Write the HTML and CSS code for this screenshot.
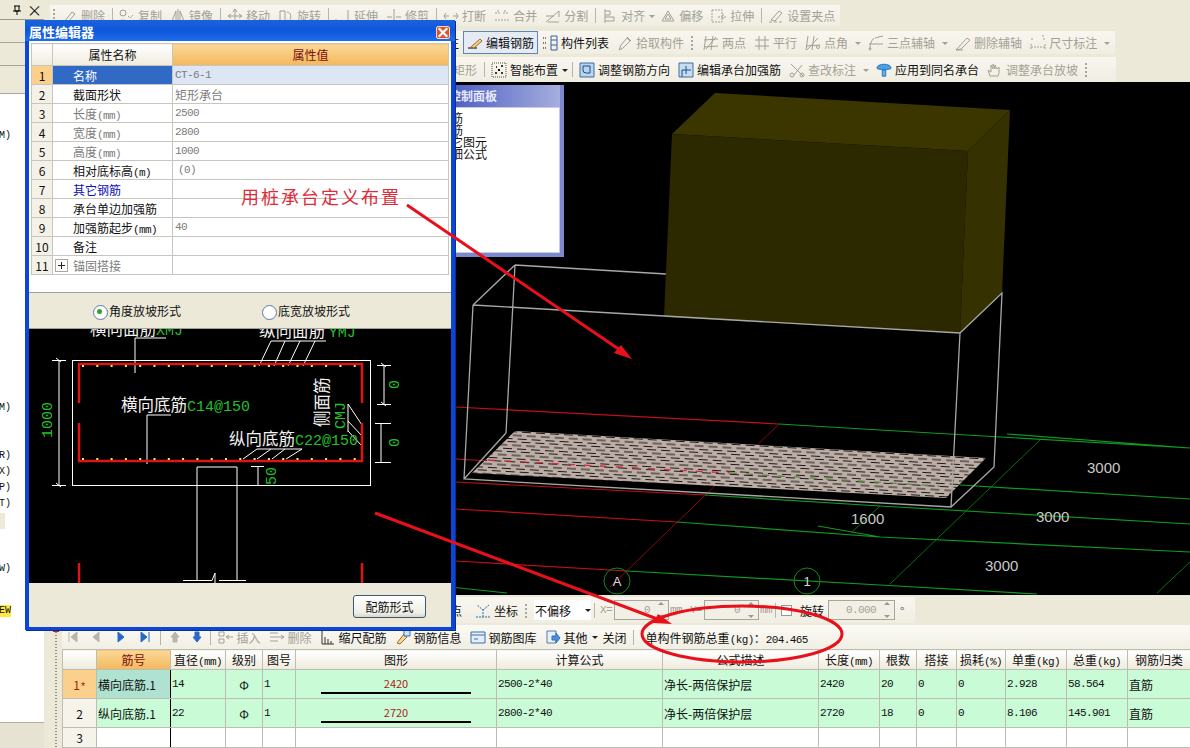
FILE: index.html
```html
<!DOCTYPE html>
<html lang="zh-CN">
<head>
    <meta charset="UTF-8">
    <title>属性编辑器</title>
    <link rel="stylesheet" href="styles.css">
</head>
<body>
<!-- icon set -->
<svg class="defs" width="0" height="0">
    <symbol id="i-del" viewBox="0 0 16 16"><path d="M2 14 10 4l3 2-7 8z M1 15h6"/></symbol>
    <symbol id="i-copy" viewBox="0 0 16 16"><circle cx="4" cy="5" r="3"/><path d="M9 8l2 2 3-3M2 12h4" stroke-dasharray="2 1"/></symbol>
    <symbol id="i-mirror" viewBox="0 0 16 16"><path d="M8 1v14M6 13H2l4-10zM10 13h4L10 3z"/></symbol>
    <symbol id="i-move" viewBox="0 0 16 16"><path d="M8 1v14M1 8h14M8 1 6 4M8 1l2 3M1 8l3-2M1 8l3 2M15 8l-3-2M15 8l-3 2M8 15l-2-3M8 15l2-3"/></symbol>
    <symbol id="i-rot" viewBox="0 0 16 16"><path d="M2 3h5v10H2zM9 4c4 0 5 6 2 9M11 13l-2-1"/></symbol>
    <symbol id="i-ext" viewBox="0 0 16 16"><path d="M1 13h6M9 13h2M13 2v13M1 11v3"/></symbol>
    <symbol id="i-trim" viewBox="0 0 16 16"><path d="M8 1v14M1 9h5M10 9h5"/></symbol>
    <symbol id="i-break" viewBox="0 0 16 16"><path d="M1 8h5M10 8h5M3 5 1 8l2 3M13 5l2 3-2 3"/></symbol>
    <symbol id="i-merge" viewBox="0 0 16 16"><path d="M1 5h5M9 5h6M1 12h14M4 2v3M11 2v3" stroke-dasharray="2 1"/></symbol>
    <symbol id="i-split" viewBox="0 0 16 16"><path d="M1 14 14 3M1 8h8M3 14h11M14 3v6"/></symbol>
    <symbol id="i-align" viewBox="0 0 16 16"><path d="M3 1v14M3 3h5v4H3M3 9h9v4H3"/></symbol>
    <symbol id="i-offset" viewBox="0 0 16 16"><path d="M2 13 8 3l6 10zM5 11l3-5 3 5z"/></symbol>
    <symbol id="i-stretch" viewBox="0 0 16 16"><path d="M1 2h10v12H1zM7 9h8M12 6v6" stroke-dasharray="2 1"/></symbol>
    <symbol id="i-grab" viewBox="0 0 16 16"><path d="M1 14h3M6 14h3M11 14h3M3 12 11 3l3 2-7 8z"/></symbol>
    <symbol id="i-pen" viewBox="0 0 16 16"><path d="M1 13h9" stroke="#000"/><path d="M4 12 13 4l2 2-8 7z" stroke="#a06a20" fill="#f4d090"/></symbol>
    <symbol id="i-list" viewBox="0 0 16 16"><path d="M1 3h3M1 8h3M1 13h3" stroke="#000" stroke-dasharray="1 1"/><path d="M9 1h6v14H9zM9 5h6M9 10h6" stroke="#36639c"/></symbol>
    <symbol id="i-pick" viewBox="0 0 16 16"><path d="M2 15l2-5 6-7 3 3-7 7z"/><path d="M10 2l4 4"/></symbol>
    <symbol id="i-two" viewBox="0 0 16 16"><path d="M3 1 1 15M10 1 8 15M1 5l14-1M1 12l14-1M13 2 3 14"/></symbol>
    <symbol id="i-par" viewBox="0 0 16 16"><path d="M5 1v14M11 1v14M1 5h14M1 11h14"/></symbol>
    <symbol id="i-ang" viewBox="0 0 16 16"><path d="M3 1 1 15M9 1 7 15M1 11l14-1M13 3 2 15"/><circle cx="13" cy="12" r="1.500"/></symbol>
    <symbol id="i-three" viewBox="0 0 16 16"><path d="M1 9h14M6 3c-3 3-4 6-4 11M15 1 7 3"/><circle cx="2" cy="14" r="1"/></symbol>
    <symbol id="i-rm" viewBox="0 0 16 16"><path d="M1 15 12 3l3 2-9 9zM1 15h7"/></symbol>
    <symbol id="i-dim" viewBox="0 0 16 16"><path d="M1 9v6M15 9v6M1 12h14M1 4h2M12 1h2M14 3v3" stroke-dasharray="2 1"/></symbol>
    <symbol id="i-smart" viewBox="0 0 16 16"><path d="M1 1h14v14H1z" stroke="#555" stroke-dasharray="1 1"/><path d="M5 5h1M10 4h2M4 11h2M10 11h2M8 7v2M7 8h2" stroke="#000" stroke-width="1.500"/></symbol>
    <symbol id="i-turn" viewBox="0 0 16 16"><path d="M1 1h14v14H1z" stroke="#3c6ea5" fill="#b8d4ee"/><path d="M4 4h7v7H7a3 3 0 0 1-3-3z" stroke="#1e4f88"/></symbol>
    <symbol id="i-cap" viewBox="0 0 16 16"><path d="M1 1h14v14H1z" stroke="#3c6ea5" fill="#c6dcf2"/><path d="M4 15V8h9M8 4v8" stroke="#1e4f88"/></symbol>
    <symbol id="i-check" viewBox="0 0 16 16"><path d="M2 2l12 12M5 13l8-10"/><circle cx="3" cy="13" r="2"/><circle cx="13" cy="13" r="2"/></symbol>
    <symbol id="i-apply" viewBox="0 0 18 18"><path d="M1 7c0-6 16-6 16 0 0 2-16 2-16 0z" fill="#4aa0e6" stroke="#2a70b8"/><path d="M7 9h4v7H7z" fill="#5ab0ea" stroke="#2a70b8"/></symbol>
    <symbol id="i-hand" viewBox="0 0 16 16"><path d="M3 14 1 8l3 2V3l2 4V2l2 5V3l2 4 2-2v6l-1 3z"/></symbol>
    <symbol id="i-axis" viewBox="0 0 16 16"><path d="M8 15V8L2 3M8 8l6-5M1 15h14" stroke="#2a70b8" stroke-dasharray="2 1"/></symbol>
    <symbol id="i-ins" viewBox="0 0 16 16"><path d="M1 3h5v4H1zM1 10h5v4H1zM15 8H8M8 8l3-2M8 8l3 2"/></symbol>
    <symbol id="i-out" viewBox="0 0 16 16"><path d="M1 4h8M1 8h14M1 12h8M15 8l-3-2M15 8l-3 2"/></symbol>
    <symbol id="i-scale" viewBox="0 0 16 16"><path d="M2 1v14h12M5 15V8M8 15v-5M11 15v-3" stroke="#333"/></symbol>
    <symbol id="i-info" viewBox="0 0 16 16"><path d="M2 14 9 5l3 3-7 7z" stroke="#a06a20" fill="#f0d8a0"/><path d="M9 1h6v6H9z" stroke="#2a70b8" fill="#cfe2f6"/></symbol>
    <symbol id="i-lib" viewBox="0 0 16 16"><path d="M1 3h14v11H1z" stroke="#3c6ea5" fill="#e4eefa"/><path d="M1 6h14M4 10h4" stroke="#3c6ea5"/></symbol>
    <symbol id="i-other" viewBox="0 0 16 16"><path d="M2 2h9v12H2z" stroke="#5a7aa8" fill="#e8f0fa"/><path d="M7 7h4V4l4 5-4 5v-3H7z" stroke="#2a70b8" fill="#4a90dc"/></symbol>
</svg>

<div class="app">
    <!-- left tree -->
    <aside class="side">
        <div class="side-tab">
            <svg class="pin" viewBox="0 0 8 10"><path d="M1 1h6M2 1v5h4V1M0 6h8M4 6v4"/></svg>
            <span class="side-close">×</span>
        </div>
        <div class="side-strip"></div>
        <div class="side-strip"></div>
        <div class="side-strip tall"></div>
        <ul class="tree">
            <li class="t-a">M)</li>
            <li class="t-b">M)</li>
            <li class="t-c">R)</li>
            <li>X)</li>
            <li>P)</li>
            <li>T)</li>
            <li class="t-sel"></li>
            <li class="t-d">W)</li>
            <li class="t-e"><span class="tag">EW</span></li>
        </ul>
        <div class="side-foot"></div>
    </aside>

    <div class="main">
        <!-- top toolbars -->
        <div class="tools">
            <div class="tb tb-1">
                <i class="grip"></i>
                <span class="it off"><svg class="ic"><use href="#i-del"/></svg>删除</span><i class="sep"></i>
                <span class="it off"><svg class="ic"><use href="#i-copy"/></svg>复制</span>
                <span class="it off"><svg class="ic"><use href="#i-mirror"/></svg>镜像</span><i class="sep"></i>
                <span class="it off"><svg class="ic"><use href="#i-move"/></svg>移动</span>
                <span class="it off"><svg class="ic"><use href="#i-rot"/></svg>旋转</span><i class="sep"></i>
                <span class="it off"><svg class="ic"><use href="#i-ext"/></svg>延伸</span>
                <span class="it off"><svg class="ic"><use href="#i-trim"/></svg>修剪</span><i class="sep"></i>
                <span class="it off"><svg class="ic"><use href="#i-break"/></svg>打断</span>
                <span class="it off"><svg class="ic"><use href="#i-merge"/></svg>合并</span>
                <span class="it off"><svg class="ic"><use href="#i-split"/></svg>分割</span><i class="sep"></i>
                <span class="it off"><svg class="ic"><use href="#i-align"/></svg>对齐<b class="caret nar"></b></span>
                <span class="it off"><svg class="ic"><use href="#i-offset"/></svg>偏移</span>
                <span class="it off"><svg class="ic"><use href="#i-stretch"/></svg>拉伸</span><i class="sep"></i>
                <span class="it off"><svg class="ic"><use href="#i-grab"/></svg>设置夹点</span>
            </div>
            <div class="tb tb-2">
                <span class="it">注</span>
                <span class="it pressed"><svg class="ic"><use href="#i-pen"/></svg>编辑钢筋</span>
                <span class="it"><svg class="ic"><use href="#i-list"/></svg>构件列表</span>
                <span class="it off"><svg class="ic"><use href="#i-pick"/></svg>拾取构件</span>
                <i class="grip"></i>
                <span class="it off"><svg class="ic"><use href="#i-two"/></svg>两点</span>
                <span class="it off"><svg class="ic"><use href="#i-par"/></svg>平行</span>
                <span class="it off"><svg class="ic"><use href="#i-ang"/></svg>点角<b class="caret"></b></span>
                <span class="it off"><svg class="ic"><use href="#i-three"/></svg>三点辅轴<b class="caret"></b></span>
                <span class="it off"><svg class="ic"><use href="#i-rm"/></svg>删除辅轴</span>
                <span class="it off"><svg class="ic"><use href="#i-dim"/></svg>尺寸标注<b class="caret"></b></span>
            </div>
            <div class="tb tb-3">
                <span class="it off">矩形</span><i class="sep"></i>
                <span class="it"><svg class="ic"><use href="#i-smart"/></svg>智能布置<b class="caret dark nar"></b></span><i class="sep"></i>
                <span class="it"><svg class="ic"><use href="#i-turn"/></svg>调整钢筋方向</span>
                <span class="it"><svg class="ic"><use href="#i-cap"/></svg>编辑承台加强筋</span>
                <span class="it off"><svg class="ic"><use href="#i-check"/></svg>查改标注<b class="caret"></b></span>
                <span class="it"><svg class="ic"><use href="#i-apply"/></svg>应用到同名承台</span>
                <span class="it off"><svg class="ic"><use href="#i-hand"/></svg>调整承台放坡</span>
                <i class="grip"></i>
            </div>
        </div>

        <!-- 3d view -->
        <div class="view">
            <svg class="scene" viewBox="44 82 1146 513" width="1146" height="513">
                <defs>
                    <pattern id="slabDash" width="42" height="10" patternUnits="userSpaceOnUse" patternTransform="rotate(3.300)">
                        <rect width="42" height="10" fill="#bcaea6"/>
                        <path d="M0 1.500h9M14 1.500h9M28 1.500h9M5 5h9M19 5h9M33 5h9M10 8.500h9M24 8.500h9M38 8.500h4M0 8.500h5" stroke="#1c1916" stroke-width="1"/>
                    </pattern>
                </defs>
                <g class="g-red">
                    <path d="M455 407 779 424M455 459 490 461M455 482 705 495M455 509 677 522M455 561 627 571"/>
                    <path class="thin" d="M779 424 610 587"/>
                </g>
                <g class="g-green">
                    <path d="M779 424 880 430 1190 448M1007 434 1190 448M960 485 1190 499M705 495 880 506 1190 524M677 522 880 537 1190 552M818 526 880 537M627 571 880 585 1037 594M450 587 507 593"/>
                    <path class="thin" d="M1040 440 890 584M1190 562 1157 593M852 532 880 506"/>
                </g>
                <g class="wire">
                    <path d="M515 265 666 274M515 265 473 305M515 265 506 433"/>
                </g>
                <polygon points="515,431 986,458 946,498 472,473" fill="url(#slabDash)"/>
                <path class="dash-r" d="M488 460 730 473"/>
                <path class="dash-g" d="M730 473 939 486"/>
                <polygon points="715,93 1010,110 968,151 672,134" fill="#3b3600"/>
                <polygon points="672,134 968,151 960,333 664,317" fill="#2c2800"/>
                <polygon points="968,151 1010,110 1002,293 960,333" fill="#353100"/>
                <g class="wire">
                    <path d="M473 305 960 333 1002 293 994 467 951 507 464 479 473 305M960 333 951 507M464 479 506 433"/>
                </g>
                <text class="dim" x="851" y="524">1600</text>
                <text class="dim" x="1087" y="473">3000</text>
                <text class="dim" x="1036" y="522">3000</text>
                <text class="dim" x="985" y="571">3000</text>
                <circle class="axis" cx="617" cy="581" r="13"/>
                <circle class="axis" cx="807" cy="581" r="13"/>
                <text class="axis-t" x="617" y="586">A</text>
                <text class="axis-t" x="807" y="586">1</text>
            </svg>
            <div class="panel">
                <div class="panel-title">控制面板</div>
                <div class="panel-body">
                    <div>筋</div>
                    <div>筋</div>
                    <div>它图元</div>
                    <div>细公式</div>
                </div>
            </div>
        </div>

        <!-- offset bar -->
        <div class="optbar">
            <div class="tb tb-opt">
                <span class="it">点</span>
                <span class="it it-coord"><svg class="ic"><use href="#i-axis"/></svg>坐标</span>
                <i class="grip"></i>
                <span class="combo">不偏移<b class="caret dark"></b></span>
                <i class="sep"></i>
                <span class="lab num">X=</span>
                <span class="spin w-xy"><span class="num">0</span><i class="updown"></i></span>
                <span class="lab num">mm</span>
                <span class="lab num y-lab">Y=</span>
                <span class="spin w-xy"><span class="num">0</span><i class="updown"></i></span>
                <span class="lab num">mm</span>
                <i class="sep"></i>
                <i class="chk"></i>
                <span class="rot-lab">旋转</span>
                <span class="spin w-rot"><span class="num">0.000</span><i class="updown"></i></span>
                <span class="lab deg">°</span>
            </div>
        </div>

        <!-- rebar table -->
        <div class="lower">
            <div class="gutter"><i class="mark"></i></div>
            <div class="lower-main">
                <div class="rebar-bar">
                    <span class="nav off"><svg viewBox="0 0 10 12"><path d="M1 1v10M9 1 3 6l6 5z"/></svg></span>
                    <span class="nav off"><svg viewBox="0 0 10 12"><path d="M8 1 2 6l6 5z"/></svg></span>
                    <span class="nav blue"><svg viewBox="0 0 10 12"><path d="M2 1l6 5-6 5z"/></svg></span>
                    <span class="nav blue"><svg viewBox="0 0 10 12"><path d="M9 1v10M1 1l6 5-6 5z"/></svg></span>
                    <i class="sep"></i>
                    <span class="nav off thin"><svg viewBox="0 0 10 12"><path d="M5 1 1 6h2v5h4V6h2z"/></svg></span>
                    <span class="nav blue thin"><svg viewBox="0 0 10 12"><path d="M5 11 1 6h2V1h4v5h2z"/></svg></span>
                    <i class="sep"></i>
                    <span class="it off"><svg class="ic"><use href="#i-ins"/></svg>插入</span>
                    <span class="it off"><svg class="ic"><use href="#i-out"/></svg>删除</span>
                    <span class="it"><svg class="ic"><use href="#i-scale"/></svg>缩尺配筋</span>
                    <span class="it"><svg class="ic"><use href="#i-info"/></svg>钢筋信息</span>
                    <span class="it"><svg class="ic"><use href="#i-lib"/></svg>钢筋图库</span>
                    <span class="it"><svg class="ic"><use href="#i-other"/></svg>其他<b class="caret dark nar"></b></span>
                    <span class="it">关闭</span>
                    <i class="sep"></i>
                    <span class="total">单构件钢筋总重<span class="num">(kg)</span>：<span class="num">204.465</span></span>
                </div>
                <table class="rebar">
                    <colgroup>
                        <col class="c-h"><col class="c-name"><col class="c-dia"><col class="c-lvl"><col class="c-fig"><col class="c-shape"><col class="c-calc"><col class="c-desc"><col class="c-len"><col class="c-cnt"><col class="c-lap"><col class="c-loss"><col class="c-uw"><col class="c-tw"><col class="c-kind">
                    </colgroup>
                    <thead>
                        <tr>
                            <th></th><th class="active">筋号</th><th>直径<span class="num">(mm)</span></th><th>级别</th><th>图号</th><th>图形</th><th>计算公式</th><th>公式描述</th><th>长度<span class="num">(mm)</span></th><th>根数</th><th>搭接</th><th>损耗<span class="num">(%)</span></th><th>单重<span class="num">(kg)</span></th><th>总重<span class="num">(kg)</span></th><th>钢筋归类</th>
                        </tr>
                    </thead>
                    <tbody>
                        <tr class="on">
                            <th class="active">1<span class="num">*</span></th><td class="name sel">横向底筋.1</td><td class="num">14</td><td class="mid">Φ</td><td class="num">1</td>
                            <td><div class="shape"><span>2420</span></div></td>
                            <td class="num">2500-2*40</td><td>净长-两倍保护层</td><td class="num">2420</td><td class="num">20</td><td class="num">0</td><td class="num">0</td><td class="num">2.928</td><td class="num">58.564</td><td>直筋</td>
                        </tr>
                        <tr class="on">
                            <th>2</th><td class="name">纵向底筋.1</td><td class="num">22</td><td class="mid">Φ</td><td class="num">1</td>
                            <td><div class="shape"><span>2720</span></div></td>
                            <td class="num">2800-2*40</td><td>净长-两倍保护层</td><td class="num">2720</td><td class="num">18</td><td class="num">0</td><td class="num">0</td><td class="num">8.106</td><td class="num">145.901</td><td>直筋</td>
                        </tr>
                        <tr>
                            <th>3</th><td class="name"></td><td></td><td></td><td></td><td></td><td></td><td></td><td></td><td></td><td></td><td></td><td></td><td></td><td></td>
                        </tr>
                    </tbody>
                </table>
            </div>
        </div>
    </div>

    <!-- property dialog -->
    <div class="dlg">
        <div class="dlg-title">属性编辑器<span class="dlg-x"><svg viewBox="0 0 9 9"><path d="M1 1l7 7M8 1 1 8"/></svg></span></div>
        <div class="dlg-grid">
            <table class="props">
                <colgroup><col class="p-h"><col class="p-name"><col class="p-val"></colgroup>
                <thead><tr><th></th><th>属性名称</th><th class="active">属性值</th></tr></thead>
                <tbody>
                    <tr class="cur"><th>1</th><td class="pn">名称</td><td class="num">CT-6-1</td></tr>
                    <tr><th>2</th><td class="pn">截面形状</td><td class="gray">矩形承台</td></tr>
                    <tr><th>3</th><td class="pn gray">长度<span class="num">(mm)</span></td><td class="num">2500</td></tr>
                    <tr><th>4</th><td class="pn gray">宽度<span class="num">(mm)</span></td><td class="num">2800</td></tr>
                    <tr><th>5</th><td class="pn gray">高度<span class="num">(mm)</span></td><td class="num">1000</td></tr>
                    <tr><th>6</th><td class="pn">相对底标高<span class="num">(m)</span></td><td class="num ind">(0)</td></tr>
                    <tr><th>7</th><td class="pn link">其它钢筋</td><td></td></tr>
                    <tr><th>8</th><td class="pn">承台单边加强筋</td><td></td></tr>
                    <tr><th>9</th><td class="pn">加强筋起步<span class="num">(mm)</span></td><td class="num">40</td></tr>
                    <tr><th>10</th><td class="pn">备注</td><td></td></tr>
                    <tr><th>11</th><td class="pn gray"><i class="plus"></i>锚固搭接</td><td></td></tr>
                </tbody>
            </table>
        </div>
        <div class="radios">
            <span class="radio checked">角度放坡形式</span>
            <span class="radio">底宽放坡形式</span>
        </div>
        <svg class="sketch" viewBox="29 329 422 254" width="422" height="254">
            <g class="white">
                <rect x="72.500" y="360.500" width="298" height="125"/>
                <path d="M197 580V467H237V580M183 580.500H212L215 573V583M219 580.500H246"/>
                <path d="M166 338H135V373M271 341H326M271 341 259 366M285 341 274 366M300 341 288 366M315 341 303 366"/>
                <path d="M171 415H147V464M257 449H302M257 449 243 459M271 449 257 459M285 449 272 459M302 449 286 459"/>
                <path d="M348 404V432M348 404 362 425M348 421 362 436M348 431 362 446"/>
                <path d="M59 360V485M52 360.500H66M52 485.500H66M56 358l5 4M56 483l5 4"/>
                <path d="M384 365V404M377 365.500H391M377 404.500H391M381 363l5 4M381 402l5 4"/>
                <path d="M381 423V462M375 423.500H391M375 462.500H391"/>
                <path d="M258 466V486M251 466.500H264"/>
            </g>
            <path class="bar" d="M79 403V364H362V403M79 423V461H362V423M79 563V583M362 563V583"/>
            <path class="dots" d="M82 366H362M82 459H362"/>
            <text class="s-w" x="90" y="335">横向面筋<tspan class="s-g">XMJ</tspan></text>
            <text class="s-w" x="259" y="337">纵向面筋 <tspan class="s-g">YMJ</tspan></text>
            <text class="s-w" x="121" y="411">横向底筋<tspan class="s-g">C14@150</tspan></text>
            <text class="s-w" x="229" y="445">纵向底筋<tspan class="s-g">C22@150</tspan></text>
            <text class="s-w" transform="translate(328 427) rotate(-90)">侧面筋</text>
            <text class="s-g s-v" transform="translate(345 429) rotate(-90)">CMJ</text>
            <text class="s-g s-v" transform="translate(52 438) rotate(-90)">1000</text>
            <text class="s-g s-v" transform="translate(399 389) rotate(-90)">0</text>
            <text class="s-g s-v" transform="translate(399 447) rotate(-90)">0</text>
            <text class="s-g s-v" transform="translate(276 485) rotate(-90)">50</text>
        </svg>
        <div class="dlg-foot"><button class="btn">配筋形式</button></div>
    </div>

    <!-- red marks drawn on the screenshot -->
    <svg class="marks" viewBox="0 0 1190 748" width="1190" height="748">
        <text class="note" x="241" y="204">用桩承台定义布置</text>
        <path d="M407 205 620 350M375 513 660 620"/>
        <polygon points="632,359 614,353 621,345"/>
        <polygon points="672,624 653,623 658,614"/>
        <ellipse cx="742" cy="634" rx="100" ry="28"/>
    </svg>
</div>
</body>
</html>
```

FILE: styles.css
```css
* {
    box-sizing: border-box;
}
body {
    margin: 0;
    font-family: "Noto Sans CJK SC", "Liberation Sans", sans-serif;
    font-size: 12px;
    color: #111;
}
.defs {
    position: absolute;
}
.app {
    position: relative;
    display: flex;
    width: 1190px;
    height: 748px;
    overflow: hidden;
    background: #ece9d8;
}
.num {
    font-family: "Liberation Mono", monospace;
    font-size: 11px;
    letter-spacing: -0.6px;
}

/* left tree */
.side {
    display: flex;
    flex-direction: column;
    width: 44px;
    background: #fff;
}
.side-tab {
    display: flex;
    align-items: center;
    justify-content: flex-end;
    gap: 6px;
    height: 20px;
    padding-right: 2px;
    border-bottom: 1px solid #9a988c;
    background: #ece9d8;
}
.pin {
    width: 8px;
    height: 10px;
    fill: none;
    stroke: #000;
}
.side-close {
    font-size: 15px;
    line-height: 14px;
}
.side-strip {
    height: 23px;
    border-bottom: 1px solid #a8a69a;
    background: #ece9d8;
}
.side-strip.tall {
    height: 28px;
}
.tree {
    flex: 1;
    width: 11px;
    margin: 0;
    padding: 34px 0 0;
    list-style: none;
}
.tree li {
    display: flex;
    justify-content: flex-end;
    height: 16px;
    font-family: "Liberation Mono", monospace;
    font-size: 10px;
    line-height: 16px;
    white-space: nowrap;
}
.tree .t-b { margin-top: 256px; }
.tree .t-c { margin-top: 32px; }
.tree .t-sel { width: 5px; background: #ece9d8; margin-top: 1px; }
.tree .t-d { margin-top: 32px; }
.tree .t-e { margin-top: 28px; }
.tag {
    background: #ffe93c;
    line-height: 12px;
    height: 12px;
}
.side-foot {
    height: 26px;
    border-top: 1px solid #b0ae9e;
    background: #e6e3d2;
}

/* toolbars */
.main {
    display: flex;
    flex-direction: column;
    flex: 1;
    min-width: 0;
}
.tools {
    display: flex;
    flex-direction: column;
    height: 82px;
    padding-top: 5px;
}
.tb {
    display: flex;
    align-items: center;
    align-self: flex-start;
    background: linear-gradient(#f8f6ef, #f0eee2);
    white-space: nowrap;
}
.tb-1 {
    height: 21px;
    margin-left: 6px;
    width: 790px;
}
.tb-2 {
    height: 23px;
    margin-top: 5px;
    margin-left: 399px;
    padding-right: 2px;
}
.tb-2 .grip {
    margin-right: 3px;
}
.tb-3 {
    height: 25px;
    margin-top: 3px;
    margin-left: 405px;
    padding-right: 26px;
}
.it {
    display: flex;
    align-items: center;
    gap: 3px;
    height: 100%;
    padding: 0 4px;
}
.it.off {
    color: #a3a195;
}
.ic {
    flex: none;
    width: 16px;
    height: 16px;
    fill: none;
    stroke: currentColor;
    stroke-width: 1;
}
.pressed {
    height: 23px;
    border: 1px solid #5f86b8;
    background: #e4ebf4;
    padding: 0 3px;
    width: 75px;
}
.caret {
    display: block;
    flex: none;
    width: 0;
    height: 0;
    margin: 1px 0 0 3px;
    border: 3px solid transparent;
    border-top: 3px solid #a3a195;
    border-bottom: 0;
    margin-right: -1px;
}
.caret.dark {
    border-top-color: #222;
}
.it .caret {
    margin-left: 4px;
}
.it .caret.nar {
    margin-left: 1px;
    margin-right: -3px;
}
.grip {
    flex: none;
    width: 8px;
    height: 15px;
    background: radial-gradient(circle, #a8a69a 1px, transparent 1.2px) center top / 2px 4px repeat-y;
}
.sep {
    flex: none;
    width: 6px;
    height: 15px;
    background: linear-gradient(#b8b6a8, #b8b6a8) center / 1px 100% no-repeat;
}

/* 3d view */
.view {
    position: relative;
    height: 513px;
    background: #000;
    overflow: hidden;
}
.scene {
    display: block;
}
.scene path {
    fill: none;
}
.g-red path {
    stroke: #c01018;
    stroke-width: 1.200;
}
.g-green path {
    stroke: #109a20;
    stroke-width: 1.200;
}
.scene .thin {
    stroke-width: 0.700;
}
.wire path {
    stroke: #a8a8a8;
    stroke-width: 1.300;
}
.dash-r {
    stroke: #d8283a;
    stroke-width: 1.300;
    stroke-dasharray: 7 9;
}
.dash-g {
    stroke: #5a8a42;
    stroke-width: 1.300;
    stroke-dasharray: 7 9;
}
.dim {
    fill: #c8c8c8;
    font-family: "Liberation Sans", sans-serif;
    font-size: 15px;
}
.axis {
    fill: none;
    stroke: #16861f;
}
.axis-t {
    fill: #d8d8d8;
    font-family: "Liberation Sans", sans-serif;
    font-size: 13px;
    text-anchor: middle;
}
.panel {
    position: absolute;
    left: 405px;
    top: 3px;
    width: 115px;
    height: 172px;
    background: #7d88cf;
    padding: 0 4px 4px 0;
}
.panel-title {
    height: 22px;
    color: #e8ecfa;
    font-weight: 700;
    font-size: 12px;
    line-height: 21px;
    background: linear-gradient(90deg, #4b5cc2, #a5aede);
}
.panel-body {
    height: 146px;
    padding: 4px 0 0 2px;
    background: #fff;
    border: 1px solid #c8cce0;
    border-left: 0;
}
.panel-body div {
    height: 12px;
    line-height: 12px;
}

/* offset bar */
.optbar {
    height: 30px;
    padding-top: 2px;
}
.tb-opt {
    height: 26px;
    margin-left: 402px;
    width: 469px;
}
.it-coord {
    margin-left: 5px;
}
.combo {
    display: flex;
    align-items: center;
    justify-content: space-between;
    flex: none;
    width: 57px;
    height: 20px;
    margin-left: 4px;
    padding: 0 1px;
    background: #fff;
}
.lab {
    color: #a3a195;
}
.deg {
    margin-left: 4px;
    color: #555;
}
.tb-opt .sep {
    margin-right: 3px;
}
.y-lab {
    margin-left: 8px;
}
.spin {
    display: flex;
    align-items: center;
    justify-content: flex-end;
    flex: none;
    height: 20px;
    margin: 0 1px 0 2px;
    border: 1px solid #a8a69a;
    background: #f2f0e6;
    color: #a3a195;
}
.w-xy {
    width: 55px;
}
.w-rot {
    width: 67px;
    margin-left: 4px;
}
.updown {
    position: relative;
    width: 13px;
    height: 100%;
    margin-left: 5px;
}
.updown::before,
.updown::after {
    content: "";
    position: absolute;
    left: 3px;
    border: 3px solid transparent;
}
.updown::before {
    top: 1px;
    border-bottom-color: #9a988c;
    border-top: 0;
}
.updown::after {
    bottom: 1px;
    border-top-color: #9a988c;
    border-bottom: 0;
}
.chk {
    flex: none;
    width: 11px;
    height: 11px;
    border: 1px solid #9a988c;
    background: #fff;
}
.rot-lab {
    margin-left: 8px;
}

/* rebar table */
.lower {
    display: flex;
    flex: 1;
    min-height: 0;
}
.gutter {
    position: relative;
    flex: none;
    width: 18px;
    background: radial-gradient(circle, #8f8d80 0.7px, transparent 1px) 11px 0 / 2px 3px repeat-y;
}
.mark {
    position: absolute;
    left: 9px;
    top: 3px;
    width: 6px;
    height: 4px;
    border-radius: 3px 3px 0 0;
    background: #c81e1e;
}
.lower-main {
    display: flex;
    flex-direction: column;
    flex: 1;
    min-width: 0;
}
.rebar-bar {
    display: flex;
    align-items: center;
    height: 26px;
    background: linear-gradient(#fbfaf5, #f1efe3);
    white-space: nowrap;
    padding-left: 0;
}
.nav {
    display: flex;
    align-items: center;
    justify-content: center;
    flex: none;
    width: 24.500px;
}
.nav:first-child {
    width: 22px;
}
.nav.thin {
    width: 22px;
}
.nav svg {
    width: 10px;
    height: 12px;
}
.nav.off svg {
    fill: #b8b6aa;
    stroke: #b8b6aa;
}
.nav.blue svg {
    fill: #2868c8;
    stroke: #2868c8;
}
.total {
    padding-left: 9px;
}
.rebar {
    width: 1128px;
    table-layout: fixed;
    border-collapse: collapse;
    background: #fff;
}
.c-h { width: 34px; }
.c-name { width: 74px; }
.c-dia { width: 55px; }
.c-lvl { width: 37px; }
.c-fig { width: 33px; }
.c-shape { width: 201px; }
.c-calc { width: 166px; }
.c-desc { width: 156px; }
.c-len { width: 61px; }
.c-cnt { width: 37px; }
.c-lap { width: 40px; }
.c-loss { width: 49px; }
.c-uw { width: 61px; }
.c-tw { width: 61px; }
.c-kind { width: 63px; }
.rebar th,
.rebar td {
    height: 29px;
    padding: 0 1px;
    border: 1px solid #bdbdb5;
    font-weight: 400;
    overflow: hidden;
    white-space: nowrap;
}
.rebar thead th {
    height: 20px;
    text-align: center;
    background: linear-gradient(#fff, #eeebdc);
}
.rebar thead th.active {
    background: linear-gradient(#fbd896, #f3b85c);
    color: #7a1010;
}
.rebar tbody th {
    background: #f5f3ea;
}
.rebar tbody th.active {
    background: #fbd08c;
    color: #8a2a10;
}
.rebar tr:last-child th,
.rebar tr:last-child td {
    height: 20px;
}
.rebar .on td {
    background: #c8fbd6;
}
.rebar .on td.sel {
    background: #b0e2d2;
}
.rebar td.name {
    border-right: 1px solid #000;
}
.rebar .mid {
    text-align: center;
}
.shape {
    width: 150px;
    margin: 0 auto;
    border-bottom: 2px solid #000;
    text-align: center;
    color: #b01818;
    line-height: 17px;
    font-size: 11px;
}

/* property dialog */
.dlg {
    position: absolute;
    left: 25px;
    top: 20px;
    display: flex;
    flex-direction: column;
    width: 430px;
    height: 610px;
    border: solid #0c46d8;
    border-width: 0 4px 3px;
    background: #ece9d8;
    box-shadow: 1px 1px 0 #08308c;
}
.dlg-title {
    position: relative;
    flex: none;
    height: 21px;
    margin: 0 -4px;
    padding-left: 4px;
    background: linear-gradient(#1a62dc, #0f57da 50%, #1e6cec);
    color: #fff;
    font-size: 13px;
    font-weight: 700;
    line-height: 23px;
}
.dlg-x {
    position: absolute;
    right: 5px;
    top: 6px;
    display: flex;
    width: 14px;
    height: 13px;
    border: 1px solid #f4d8cc;
    border-radius: 2px;
    background: #e0542c;
}
.dlg-x svg {
    width: 12px;
    height: 11px;
    fill: none;
    stroke: #fff;
    stroke-width: 1.800;
}
.dlg-grid {
    flex: none;
    height: 252px;
    padding: 2px 3px 0 2px;
    background: #fff;
    border-bottom: 1px solid #a0a098;
}
.props {
    width: 417px;
    table-layout: fixed;
    border-collapse: collapse;
}
.p-h { width: 21px; }
.p-name { width: 120px; }
.p-val { width: 276px; }
.props th,
.props td {
    height: 19px;
    padding: 0 2px;
    border: 1px solid #c6c6be;
    font-weight: 400;
    white-space: nowrap;
    overflow: hidden;
}
.props thead th {
    height: 22px;
    background: linear-gradient(#fff, #efecde);
    text-align: center;
}
.props thead th.active {
    background: linear-gradient(#fbd896, #f3b85c);
    color: #7a1010;
}
.props tbody th {
    background: #f4f2e8;
    text-align: center;
}
.props td {
    color: #7c7c7c;
}
.props .pn {
    padding-left: 20px;
    color: #111;
}
.props .pn.gray,
.props .gray {
    color: #7c7c7c;
}
.props .pn.link {
    color: #0a10b8;
}
.props .ind {
    padding-left: 5px;
}
.props .cur th {
    background: #fbd08c;
}
.props .cur .pn {
    background: #316ac5;
    color: #fff;
}
.props .cur td:last-child {
    background: #dde6f4;
}
.props .pn:has(.plus) {
    position: relative;
}
.plus {
    position: absolute;
    left: 2px;
    top: 3px;
    width: 13px;
    height: 13px;
    border: 1px solid #a8a8a0;
    background:
        linear-gradient(#222, #222) center / 7px 1px no-repeat,
        linear-gradient(#222, #222) center / 1px 7px no-repeat;
}
.radios {
    display: flex;
    flex: none;
    align-items: center;
    height: 36px;
    padding-left: 64px;
    gap: 81px;
    border-bottom: 1px solid #a0a098;
}
.radio {
    position: relative;
    padding-left: 16px;
}
.radio::before {
    content: "";
    position: absolute;
    left: 0;
    top: 3px;
    width: 13px;
    height: 13px;
    border: 1px solid #5a7aa8;
    border-radius: 50%;
    background: #fff;
}
.radio.checked::after {
    content: "";
    position: absolute;
    left: 4px;
    top: 7px;
    width: 5px;
    height: 5px;
    border-radius: 50%;
    background: #2fa32f;
}
.sketch {
    display: block;
    flex: none;
    background: #000;
}
.sketch path,
.sketch rect {
    fill: none;
}
.white path,
.white rect {
    stroke: #fff;
    stroke-width: 1;
}
.sketch .bar {
    stroke: #e01414;
    stroke-width: 2.500;
}
.sketch .dots {
    stroke: #ffe860;
    stroke-width: 2;
    stroke-dasharray: 2 12.300;
}
.s-w {
    fill: #f2f2f2;
    font-size: 16.500px;
}
.s-g {
    fill: #22c02a;
    font-family: "Liberation Mono", monospace;
    font-size: 15px;
}
.s-v {
    font-size: 15px;
}
.dlg-foot {
    display: flex;
    flex: 1;
    align-items: flex-start;
    justify-content: flex-end;
    padding: 12px 25px 0 0;
}
.btn {
    width: 73px;
    height: 23px;
    padding: 0;
    border: 1px solid #3c5a78;
    border-radius: 3px;
    background: linear-gradient(#fff, #f0efe6 80%, #d8d6c8);
    font: inherit;
    color: #111;
}

/* red marks */
.marks {
    position: absolute;
    left: 0;
    top: 0;
    pointer-events: none;
}
.marks path,
.marks ellipse {
    fill: none;
    stroke: #e8101a;
    stroke-width: 3;
}
.marks polygon {
    fill: #e8101a;
}
.note {
    fill: #e02c3a;
    font-size: 18px;
    letter-spacing: 2px;
}
```
